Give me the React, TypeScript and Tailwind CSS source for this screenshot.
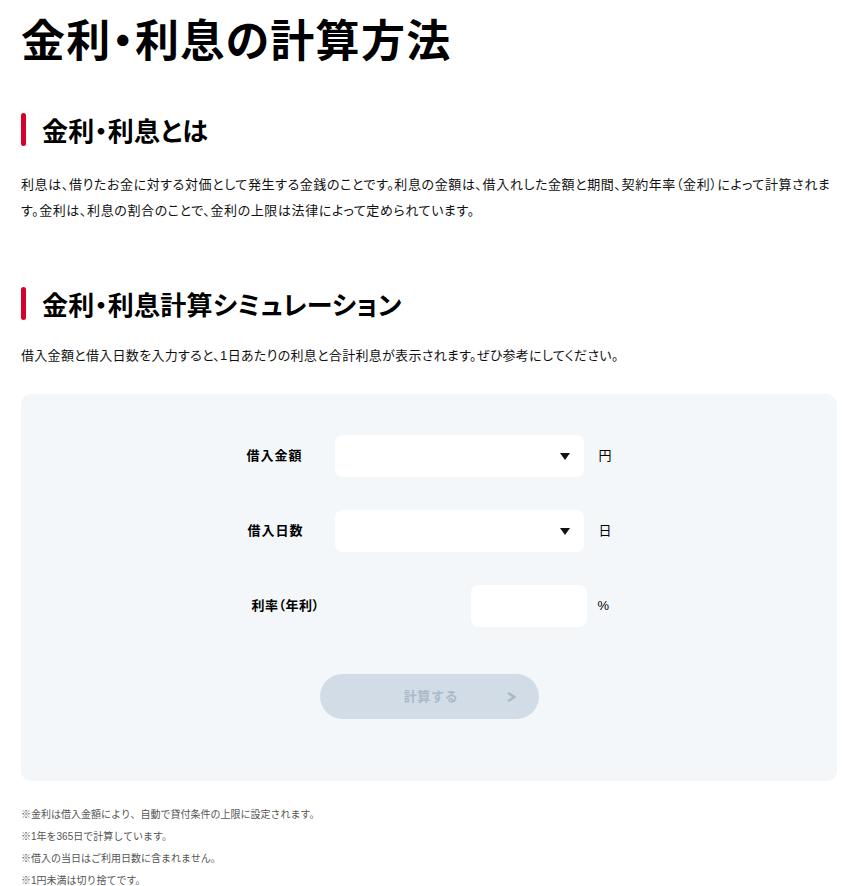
import React, { useState } from 'react';

const FONT = "font-['Liberation_Sans','Noto_Sans_CJK_JP',sans-serif]";

const amounts = ['', '1万円', '5万円', '10万円', '30万円', '50万円', '100万円'];
const days = ['', '7日', '14日', '30日', '60日', '90日', '180日'];

const SectionHeading: React.FC<{ children: React.ReactNode }> = ({ children }) => (
    <h2 className="flex items-center gap-[16px] font-['Noto_Sans_CJK_JP',sans-serif] font-bold text-[26px] leading-[33px] text-black tracking-[0.01em] [font-feature-settings:'palt']">
        <span className="w-[5px] h-[33px] rounded-full bg-[#d5002b] shrink-0" />
        <span>{children}</span>
    </h2>
);

const SelectField: React.FC<{ options: string[] }> = ({ options }) => {
    const [value, setValue] = useState('');
    return (
        <div className="relative w-[250px]">
            <select
                value={value}
                onChange={e => setValue(e.target.value)}
                className="appearance-none w-full h-[42px] rounded-[8px] bg-white px-3 text-[13px] outline-none"
            >
                {options.map(o => (
                    <option key={o} value={o}>{o}</option>
                ))}
            </select>
            <svg className="absolute right-[14px] top-[18px] pointer-events-none" width="10" height="7" viewBox="0 0 10 7">
                <path d="M0 0 H10 L5 7 Z" fill="#111" />
            </svg>
        </div>
    );
};

const App: React.FC = () => {
    const [rate, setRate] = useState('');

    return (
        <div className={`min-h-screen bg-white pl-[21px] pr-[18px] pt-[10px] text-black ${FONT}`}>
            <h1 className="font-['Noto_Sans_CJK_JP',sans-serif] font-bold text-[44px] leading-[56px] tracking-[0.03em] [font-feature-settings:'palt']">
                金利・利息の計算方法
            </h1>

            {/* 金利・利息とは */}
            <section className="mt-[47px]">
                <SectionHeading>金利・利息とは</SectionHeading>
                <p className="mt-[26px] text-[13px] leading-[26px] text-[#111] tracking-[0.6px] [font-feature-settings:'palt']">
                    利息は、借りたお金に対する対価として発生する金銭のことです。利息の金額は、借入れした金額と期間、契約年率（金利）によって計算されます。金利は、利息の割合のことで、金利の上限は法律によって定められています。
                </p>
            </section>

            {/* シミュレーション */}
            <section className="mt-[63px]">
                <SectionHeading>金利・利息計算シミュレーション</SectionHeading>
                <p className="mt-[23px] text-[13px] leading-[26px] text-[#111] tracking-[0.3px] [font-feature-settings:'palt']">
                    借入金額と借入日数を入力すると、1日あたりの利息と合計利息が表示されます。ぜひ参考にしてください。
                </p>

                <div className="mt-[25px] rounded-[10px] bg-[#f3f7fa] pt-[41px] pb-[62px]">
                    <div className="w-[365px] mx-auto flex flex-col gap-[33px]">
                        <div className="flex items-center h-[42px]">
                            <label className="w-[89px] text-[13px] font-bold tracking-[0.08em]">借入金額</label>
                            <SelectField options={amounts} />
                            <span className="ml-[14px] text-[13px]">円</span>
                        </div>
                        <div className="flex items-center h-[42px]">
                            <label className="w-[89px] text-[13px] font-bold tracking-[0.08em] pl-[1px]">借入日数</label>
                            <SelectField options={days} />
                            <span className="ml-[14px] text-[13px]">日</span>
                        </div>
                        <div className="flex items-center h-[42px]">
                            <label className="w-[89px] text-[13px] font-bold tracking-[0.04em] pl-[5px] whitespace-nowrap [font-feature-settings:'palt']">利率（年利）</label>
                            <div className="w-[251px] flex justify-end">
                                <input
                                    value={rate}
                                    onChange={e => setRate(e.target.value)}
                                    className="w-[116px] h-[42px] rounded-[8px] bg-white px-3 text-[13px] outline-none"
                                />
                            </div>
                            <span className="ml-[11px] text-[13px]">%</span>
                        </div>
                    </div>

                    <div className="mt-[47px] flex justify-center">
                        <button
                            disabled
                            className="relative w-[219px] h-[45px] rounded-full bg-[#d1dce6] text-[#a9b9c8] text-[13px] font-bold tracking-[0.05em] flex items-center justify-center"
                        >
                            <span className="ml-[4px]">計算する</span>
                            <svg className="absolute right-[22px] top-[18px]" width="10" height="10" viewBox="0 0 10 10">
                                <path d="M2 1.5 L7.5 5 L2 8.5" fill="none" stroke="#a9b9c8" strokeWidth="2.6" strokeLinejoin="round" strokeLinecap="round" />
                            </svg>
                        </button>
                    </div>
                </div>

                <ul className="mt-[23px] text-[10px] leading-[22px] text-[#555]">
                    <li>※金利は借入金額により、自動で貸付条件の上限に設定されます。</li>
                    <li>※1年を365日で計算しています。</li>
                    <li>※借入の当日はご利用日数に含まれません。</li>
                    <li>※1円未満は切り捨てです。</li>
                </ul>
            </section>
        </div>
    );
};

export default App;
